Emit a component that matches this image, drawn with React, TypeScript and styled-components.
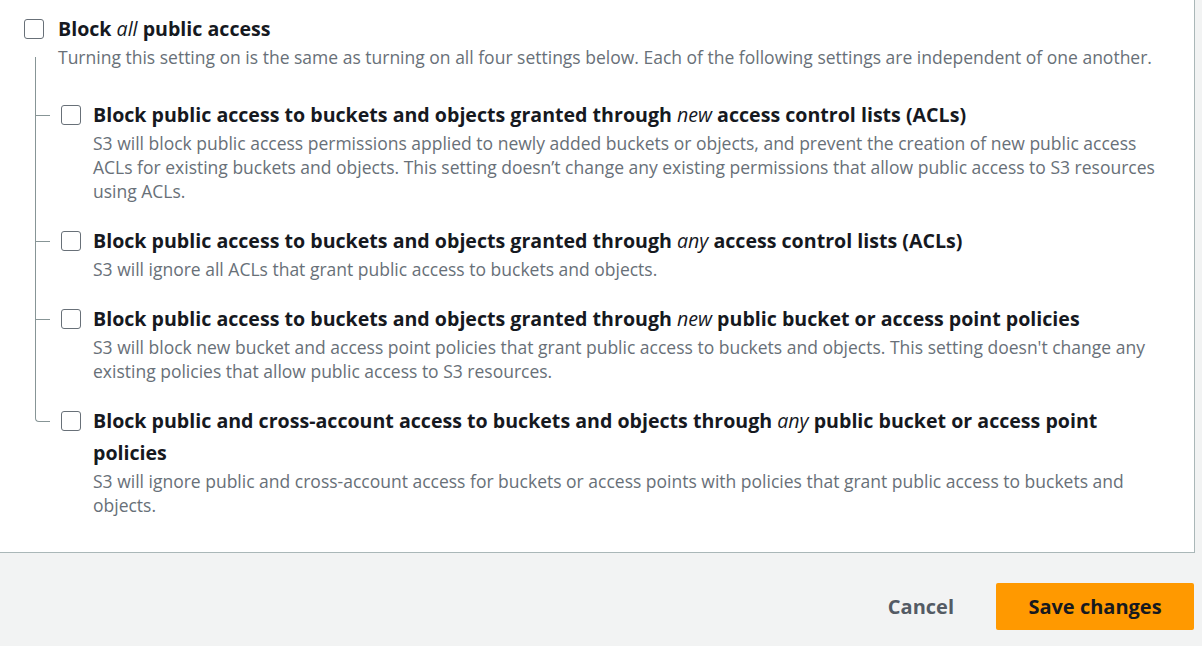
import React from 'react';
import styled, { createGlobalStyle } from 'styled-components';

const ROW_GAP = 22;
const FIRST_GAP = 30;

const GlobalStyle = createGlobalStyle`
  html, body {
    margin: 0;
    padding: 0;
    background: #f2f3f3;
    font-family: "Open Sans", "Noto Sans", sans-serif;
    color: #16191f;
  }
`;

const Page = styled.div`
  width: 1202px;
  height: 646px;
  overflow: hidden;
  background: #f2f3f3;
`;

const Card = styled.section`
  width: 1195px;
  box-sizing: border-box;
  background: #fff;
  border-right: 1px solid #aab7b8;
  border-bottom: 1px solid #aab7b8;
  padding: 13px 0 35px 24px;
`;

const Row = styled.div<{ $gap: number }>`
  display: flex;
  align-items: flex-start;
  gap: ${({ $gap }) => $gap}px;
`;

const Box = styled.span`
  flex: none;
  width: 20px;
  height: 20px;
  box-sizing: border-box;
  border: 1px solid #687078;
  border-radius: 3px;
  margin-top: 6px;
  background: #fff;
`;

const Text = styled.div`
  flex: 1;
  padding-right: 32px;
`;

const Title = styled.div`
  font-size: 19.6px;
  font-weight: 700;
  line-height: 32px;
  color: #16191f;

  em {
    font-weight: 400;
    font-style: italic;
  }
`;

const Desc = styled.div`
  font-size: 17.5px;
  line-height: 24px;
  color: #687078;
`;

const Children = styled.div`
  display: flex;
  flex-direction: column;
  gap: ${ROW_GAP}px;
  margin-top: ${FIRST_GAP}px;
  margin-left: 11px;
`;

const Branch = styled.div<{ $first?: boolean; $last?: boolean }>`
  position: relative;
  padding-left: 26px;

  &::before {
    content: '';
    position: absolute;
    left: 0;
    top: ${({ $first }) => -($first ? FIRST_GAP + 12 : ROW_GAP)}px;
    height: ${({ $first }) => ($first ? FIRST_GAP + 28 : ROW_GAP + 16)}px;
    width: 14px;
    border-left: 1px solid #879596;
    border-bottom: ${({ $last }) => ($last ? '1px solid #879596' : 'none')};
    border-bottom-left-radius: ${({ $last }) => ($last ? '4px' : '0')};
  }

  &::after {
    content: '';
    display: ${({ $last }) => ($last ? 'none' : 'block')};
    position: absolute;
    left: 0;
    top: 16px;
    bottom: -${ROW_GAP}px;
    width: 14px;
    border-top: 1px solid #879596;
    border-left: 1px solid #879596;
  }
`;

const Footer = styled.div`
  display: flex;
  justify-content: flex-end;
  align-items: center;
  gap: 20px;
  padding: 30px 8px 0 0;
`;

const LinkButton = styled.button`
  border: none;
  background: none;
  font-family: inherit;
  font-size: 20px;
  font-weight: 700;
  color: #545b64;
  padding: 0 22px;
  height: 46px;
  cursor: pointer;
`;

const PrimaryButton = styled.button`
  border: none;
  border-radius: 2px;
  background: #ff9900;
  font-family: inherit;
  font-size: 20px;
  font-weight: 700;
  color: #16191f;
  width: 198px;
  height: 47px;
  cursor: pointer;
`;

const options = [
  {
    title: (
      <>
        Block public access to buckets and objects granted through <em>new</em> access control lists (ACLs)
      </>
    ),
    desc: 'S3 will block public access permissions applied to newly added buckets or objects, and prevent the creation of new public access ACLs for existing buckets and objects. This setting doesn’t change any existing permissions that allow public access to S3 resources using ACLs.',
  },
  {
    title: (
      <>
        Block public access to buckets and objects granted through <em>any</em> access control lists (ACLs)
      </>
    ),
    desc: 'S3 will ignore all ACLs that grant public access to buckets and objects.',
  },
  {
    title: (
      <>
        Block public access to buckets and objects granted through <em>new</em> public bucket or access point policies
      </>
    ),
    desc: "S3 will block new bucket and access point policies that grant public access to buckets and objects. This setting doesn't change any existing policies that allow public access to S3 resources.",
  },
  {
    title: (
      <>
        Block public and cross-account access to buckets and objects through <em>any</em> public bucket or access point policies
      </>
    ),
    desc: 'S3 will ignore public and cross-account access for buckets or access points with policies that grant public access to buckets and objects.',
  },
];

const App: React.FC = () => {
  return (
    <Page>
      <GlobalStyle />
      <Card>
        <Row $gap={14}>
          <Box />
          <Text>
            <Title>
              Block <em>all</em> public access
            </Title>
            <Desc>
              Turning this setting on is the same as turning on all four settings below. Each of the following settings are independent of one another.
            </Desc>
          </Text>
        </Row>
        <Children>
          {options.map((o, i) => (
            <Branch key={i} $first={i === 0} $last={i === options.length - 1}>
              <Row $gap={12}>
                <Box />
                <Text>
                  <Title>{o.title}</Title>
                  <Desc>{o.desc}</Desc>
                </Text>
              </Row>
            </Branch>
          ))}
        </Children>
      </Card>
      <Footer>
        <LinkButton>Cancel</LinkButton>
        <PrimaryButton>Save changes</PrimaryButton>
      </Footer>
    </Page>
  );
};

export default App;
